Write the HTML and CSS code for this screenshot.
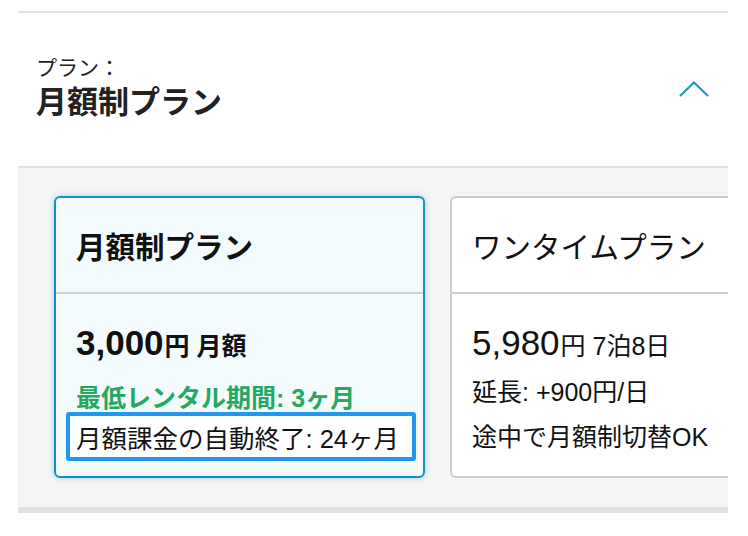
FILE: index.html
```html
<!DOCTYPE html>
<html lang="ja">
<head>
<meta charset="utf-8">
<link rel="stylesheet" href="styles.css">
</head>
<body>
<div class="panel">
  <div class="head">
    <div class="head-text">
      <div class="label">プラン：</div>
      <div class="title">月額制プラン</div>
    </div>
    <svg class="chev" width="30" height="16" viewBox="0 0 30 16"><path d="M1 15 L15 1.5 L29 15" fill="none" stroke="#1a93c6" stroke-width="2"/></svg>
  </div>
  <div class="body">
    <div class="cards">
      <div class="card active">
        <div class="card-head bold">月額制プラン</div>
        <div class="card-body">
          <div class="price bold"><span class="num">3,000</span><span class="unit">円 月額</span></div>
          <div class="green">最低レンタル期間: 3ヶ月</div>
          <div class="hl">月額課金の自動終了: 24ヶ月</div>
        </div>
      </div>
      <div class="card">
        <div class="card-head">ワンタイムプラン</div>
        <div class="card-body">
          <div class="price"><span class="num">5,980</span><span class="unit">円 7泊8日</span></div>
          <div class="line">延長: +900円/日</div>
          <div class="line">途中で月額制切替OK</div>
        </div>
      </div>
    </div>
  </div>
  <div class="foot"></div>
</div>
</body>
</html>
```
FILE: styles.css
```css
* { box-sizing: border-box; }
body {
  margin: 0;
  background: #fff;
  font-family: "Liberation Sans", "Noto Sans CJK JP", sans-serif;
  color: #1f1f1f;
}
.panel {
  margin: 11px 0 0 18px;
  width: 710px;
  border-top: 2px solid #dde3e6;
}
.head {
  height: 155px;
  display: flex;
  align-items: center;
  justify-content: space-between;
  padding: 0 19px 2px 18px;
  border-bottom: 2px solid #dde3e6;
}
.label { font-size: 21px; line-height: 26px; color: #222; }
.title { font-size: 31px; line-height: 38px; font-weight: bold; color: #222; margin-top: 3px; }
.chev { display: block; }
.body {
  background: #f5f5f5;
  padding: 28px 0 29px 36px;
  overflow: hidden;
}
.cards { display: flex; gap: 25px; }
.card {
  flex: 0 0 371px;
  height: 282px;
  border: 2px solid #cccccc;
  border-radius: 6px;
  background: #fff;
  display: flex;
  flex-direction: column;
}
.card.active {
  border-color: #1590c4;
  background: #f3fbfd;
  box-shadow: 0 0 6px rgba(21, 144, 196, 0.35);
}
.card-head {
  height: 96px;
  border-bottom: 2px solid #cfcfcf;
  display: flex;
  align-items: center;
  padding-left: 20px;
  font-size: 29.5px;
  color: #111;
}
.bold { font-weight: bold; }
.card-body { padding: 29px 4px 0 20px; }
.card.active .card-body { padding-left: 10px; }
.card.active .price, .card.active .green { padding-left: 10px; }
.price {
  display: flex;
  align-items: baseline;
  height: 40px;
  line-height: 40px;
  color: #111;
  white-space: nowrap;
}
.price .num { font-size: 35px; }
.price .unit { font-size: 25px; margin-left: 1px; }
.green {
  margin-top: 21px;
  font-size: 25px;
  line-height: 28px;
  font-weight: bold;
  color: #24a862;
  white-space: nowrap;
}
.hl {
  width: 350px;
  height: 49px;
  border: 4px solid #2196f3;
  border-radius: 3px;
  background: #fff;
  font-size: 25.5px;
  display: flex;
  align-items: center;
  padding-left: 6px;
  color: #111;
  white-space: nowrap;
}
.line { font-size: 25px; line-height: 28px; color: #111; white-space: nowrap; }
.card:not(.active) .price { margin-bottom: 15px; }
.card:not(.active) .line + .line { margin-top: 17px; }
.foot { height: 6px; background: #dbe1e4; }
```
